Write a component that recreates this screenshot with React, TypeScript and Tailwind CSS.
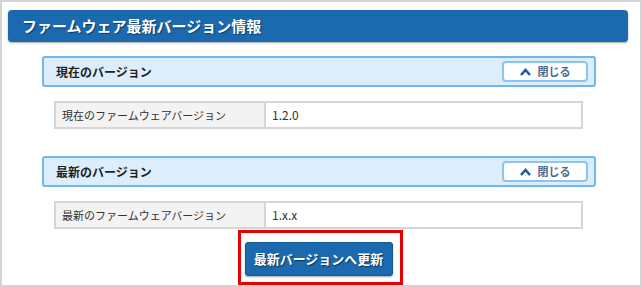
import React from "react";

const font = { fontFamily: '"Noto Sans CJK JP", "Noto Sans", sans-serif' };

function Chevron() {
  return (
    <svg width="11" height="8" viewBox="0 0 11 8" className="mr-[7px]">
      <path d="M1 7 L5.5 2 L10 7" fill="none" stroke="#1f5c9c" strokeWidth="2.6" strokeLinejoin="miter" />
    </svg>
  );
}

function Section({ title, label, value }: { title: string; label: string; value: string }) {
  return (
    <div>
      <div className="h-[31px] rounded-[3px] border-2 border-[#70b7f0] bg-[#dcedfb] flex items-center justify-between pl-[12px] pr-[6px]">
        <span className="text-[12px] font-bold text-[#222]">{title}</span>
        <button className="w-[86px] h-[21px] rounded-[4px] border-2 border-[#8cc4f1] bg-white flex items-center justify-center text-[11px] font-bold text-[#4a6a8c]">
          <Chevron />
          閉じる
        </button>
      </div>
      <div className="mt-[14px] ml-[12px] mr-[13px] h-[28px] border-2 border-[#d6d6d6] flex text-[11px] text-[#333]">
        <div className="w-[210px] bg-[#f3f3f3] border-r-2 border-[#d6d6d6] flex items-center pl-[6px]">{label}</div>
        <div className="flex-1 bg-white flex items-center pl-[6px] text-[12px]">{value}</div>
      </div>
    </div>
  );
}

export default function App() {
  return (
    <div style={font} className="w-[642px] h-[287px] border-2 border-[#d4d4d4] bg-white box-border pt-[8px] pl-[6px] pr-[12px] flex flex-col">
      <div className="h-[33px] rounded-[4px] bg-[#1b69ae] shadow-[0_1px_2px_rgba(0,0,0,0.35)] flex items-center pl-[14px]">
        <span className="text-[15px] font-bold text-white [text-shadow:1px_1px_1px_rgba(0,0,0,0.45)]">ファームウェア最新バージョン情報</span>
      </div>
      <div className="pl-[34px] pr-[32px] mt-[14px] flex flex-col">
        <Section title="現在のバージョン" label="現在のファームウェアバージョン" value="1.2.0" />
        <div className="mt-[27px]">
          <Section title="最新のバージョン" label="最新のファームウェアバージョン" value="1.x.x" />
        </div>
      </div>
      <div className="mt-[1px] flex justify-center pl-[4px]">
        <div className="w-[165px] h-[55px] border-[3px] border-[#e60000] pt-[9px] pl-[4px]">
          <button className="w-[148px] h-[34px] rounded-[3px] bg-[#1b69ae] border border-[#165a95] shadow-[0_1px_2px_rgba(0,0,0,0.35)] text-[13px] font-bold text-white [text-shadow:1px_1px_1px_rgba(0,0,0,0.5)]">
            最新バージョンへ更新
          </button>
        </div>
      </div>
    </div>
  );
}
